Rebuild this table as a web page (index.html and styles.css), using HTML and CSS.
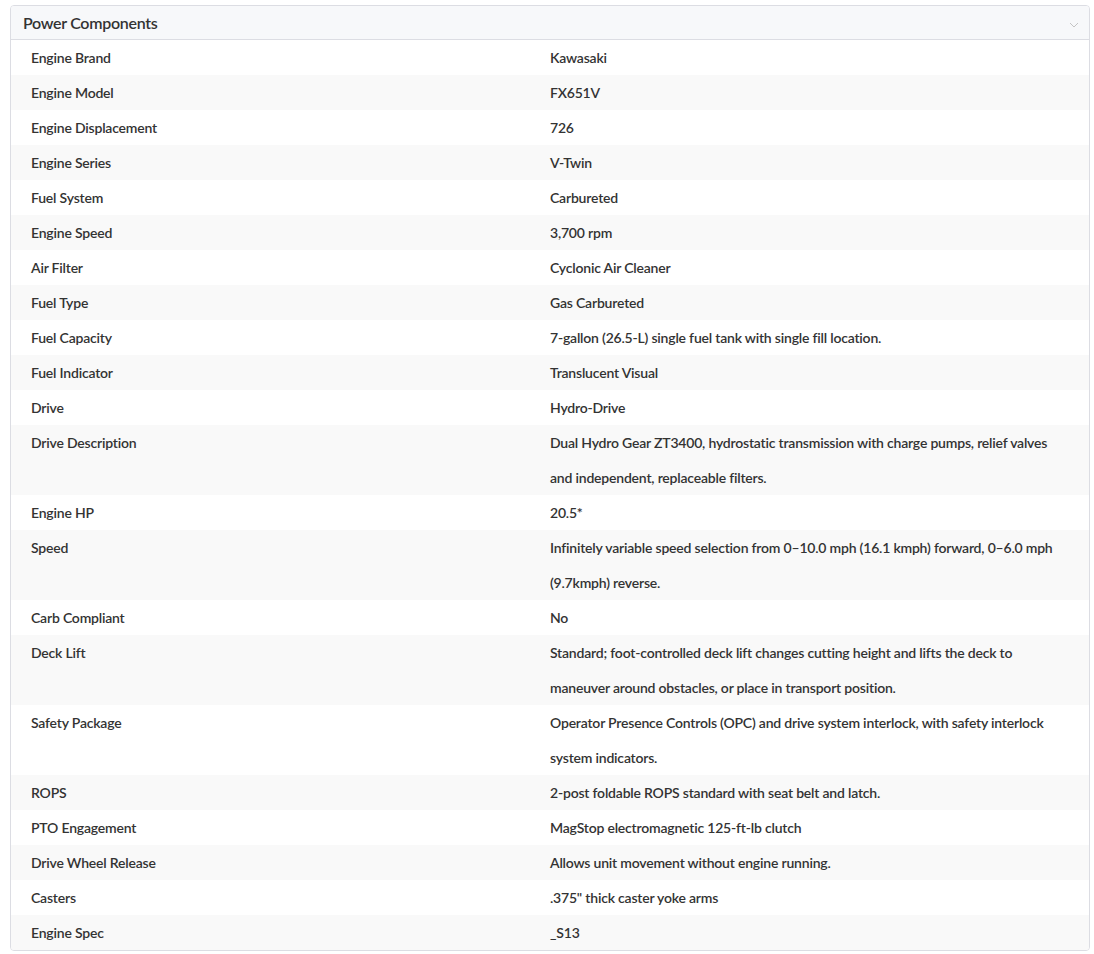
FILE: index.html
```html
<!DOCTYPE html>
<html>
<head>
<meta charset="utf-8">
<link rel="stylesheet" href="styles.css">
</head>
<body>
<div class="panel">
  <div class="panel-header">
    <span class="panel-title">Power Components</span>
    <svg class="chevron" width="10" height="6" viewBox="0 0 10 6"><path d="M1 1 L5 5 L9 1" fill="none" stroke="#c4c4c4" stroke-width="1"/></svg>
  </div>
  <div class="specs">
    <div class="row"><div class="label">Engine Brand</div><div class="value">Kawasaki</div></div>
    <div class="row"><div class="label">Engine Model</div><div class="value">FX651V</div></div>
    <div class="row"><div class="label">Engine Displacement</div><div class="value">726</div></div>
    <div class="row"><div class="label">Engine Series</div><div class="value">V-Twin</div></div>
    <div class="row"><div class="label">Fuel System</div><div class="value">Carbureted</div></div>
    <div class="row"><div class="label">Engine Speed</div><div class="value">3,700 rpm</div></div>
    <div class="row"><div class="label">Air Filter</div><div class="value">Cyclonic Air Cleaner</div></div>
    <div class="row"><div class="label">Fuel Type</div><div class="value">Gas Carbureted</div></div>
    <div class="row"><div class="label">Fuel Capacity</div><div class="value">7-gallon (26.5-L) single fuel tank with single fill location.</div></div>
    <div class="row"><div class="label">Fuel Indicator</div><div class="value">Translucent Visual</div></div>
    <div class="row"><div class="label">Drive</div><div class="value">Hydro-Drive</div></div>
    <div class="row"><div class="label">Drive Description</div><div class="value">Dual Hydro Gear ZT3400, hydrostatic transmission with charge pumps, relief valves and independent, replaceable filters.</div></div>
    <div class="row"><div class="label">Engine HP</div><div class="value">20.5*</div></div>
    <div class="row"><div class="label">Speed</div><div class="value">Infinitely variable speed selection from 0–10.0 mph (16.1 kmph) forward, 0–6.0 mph (9.7kmph) reverse.</div></div>
    <div class="row"><div class="label">Carb Compliant</div><div class="value">No</div></div>
    <div class="row"><div class="label">Deck Lift</div><div class="value">Standard; foot-controlled deck lift changes cutting height and lifts the deck to maneuver around obstacles, or place in transport position.</div></div>
    <div class="row"><div class="label">Safety Package</div><div class="value">Operator Presence Controls (OPC) and drive system interlock, with safety interlock system indicators.</div></div>
    <div class="row"><div class="label">ROPS</div><div class="value">2-post foldable ROPS standard with seat belt and latch.</div></div>
    <div class="row"><div class="label">PTO Engagement</div><div class="value">MagStop electromagnetic 125-ft-lb clutch</div></div>
    <div class="row"><div class="label">Drive Wheel Release</div><div class="value">Allows unit movement without engine running.</div></div>
    <div class="row"><div class="label">Casters</div><div class="value">.375" thick caster yoke arms</div></div>
    <div class="row"><div class="label">Engine Spec</div><div class="value">_S13</div></div>
  </div>
</div>
</body>
</html>
```

FILE: styles.css
```css
html, body {
  margin: 0;
  padding: 0;
  background: #fff;
}
body {
  padding: 5px 4px 0 10px;
  font-family: "Source Sans Pro", Lato, "Liberation Sans", sans-serif;
  color: #333;
}
.panel {
  border: 1px solid #dcdde3;
  border-radius: 4px;
  overflow: hidden;
  width: 1078px;
}
.panel-header {
  display: flex;
  align-items: center;
  justify-content: space-between;
  height: 33px;
  padding: 0 10px 0 12px;
  box-sizing: content-box;
  background: #f7f8fa;
  border-bottom: 1px solid #dcdde3;
}
.panel-title {
  font-size: 16px;
  font-weight: 600;
  letter-spacing: -0.3px;
  color: #333;
  margin-top: -1px;
}
.chevron {
  margin-top: 5px;
}
.row {
  display: grid;
  grid-template-columns: 539px 1fr;
  line-height: 35px;
  font-size: 14px;
  font-weight: 600;
  letter-spacing: -0.2px;
  color: #333;
}
.row:nth-child(even) {
  background: #f9f9f9;
}
.label {
  padding-left: 20px;
}
.value {
  padding-right: 20px;
}
```
